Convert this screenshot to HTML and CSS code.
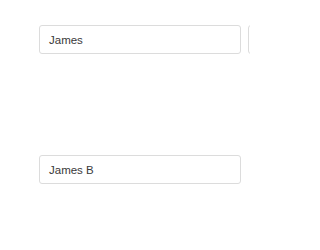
FILE: index.html
```html
<!DOCTYPE html>
<html>
<head>
<meta charset="utf-8">
<link rel="stylesheet" href="styles.css">
</head>
<body>
<div class="page">
  <div class="row">
    <div class="field">James</div>
    <div class="field field-next"></div>
  </div>
  <div class="row">
    <div class="field">James B</div>
  </div>
</div>
</body>
</html>
```
FILE: styles.css
```css
html, body {
  margin: 0;
  padding: 0;
  background: #ffffff;
  overflow: hidden;
}
.page {
  width: 250px;
  height: 250px;
  padding: 25px 0 0 39px;
  box-sizing: border-box;
  display: flex;
  flex-direction: column;
  gap: 101px;
  overflow: hidden;
}
.row {
  display: flex;
  gap: 7px;
  flex-wrap: nowrap;
}
.field {
  flex: 0 0 auto;
  width: 202px;
  height: 29px;
  box-sizing: border-box;
  border: 1px solid #dcdcdc;
  border-radius: 3px;
  padding: 0 9px;
  display: flex;
  align-items: center;
  font-family: "Liberation Sans", Arial, sans-serif;
  font-size: 11.5px;
  color: #3a3a3a;
}
```
